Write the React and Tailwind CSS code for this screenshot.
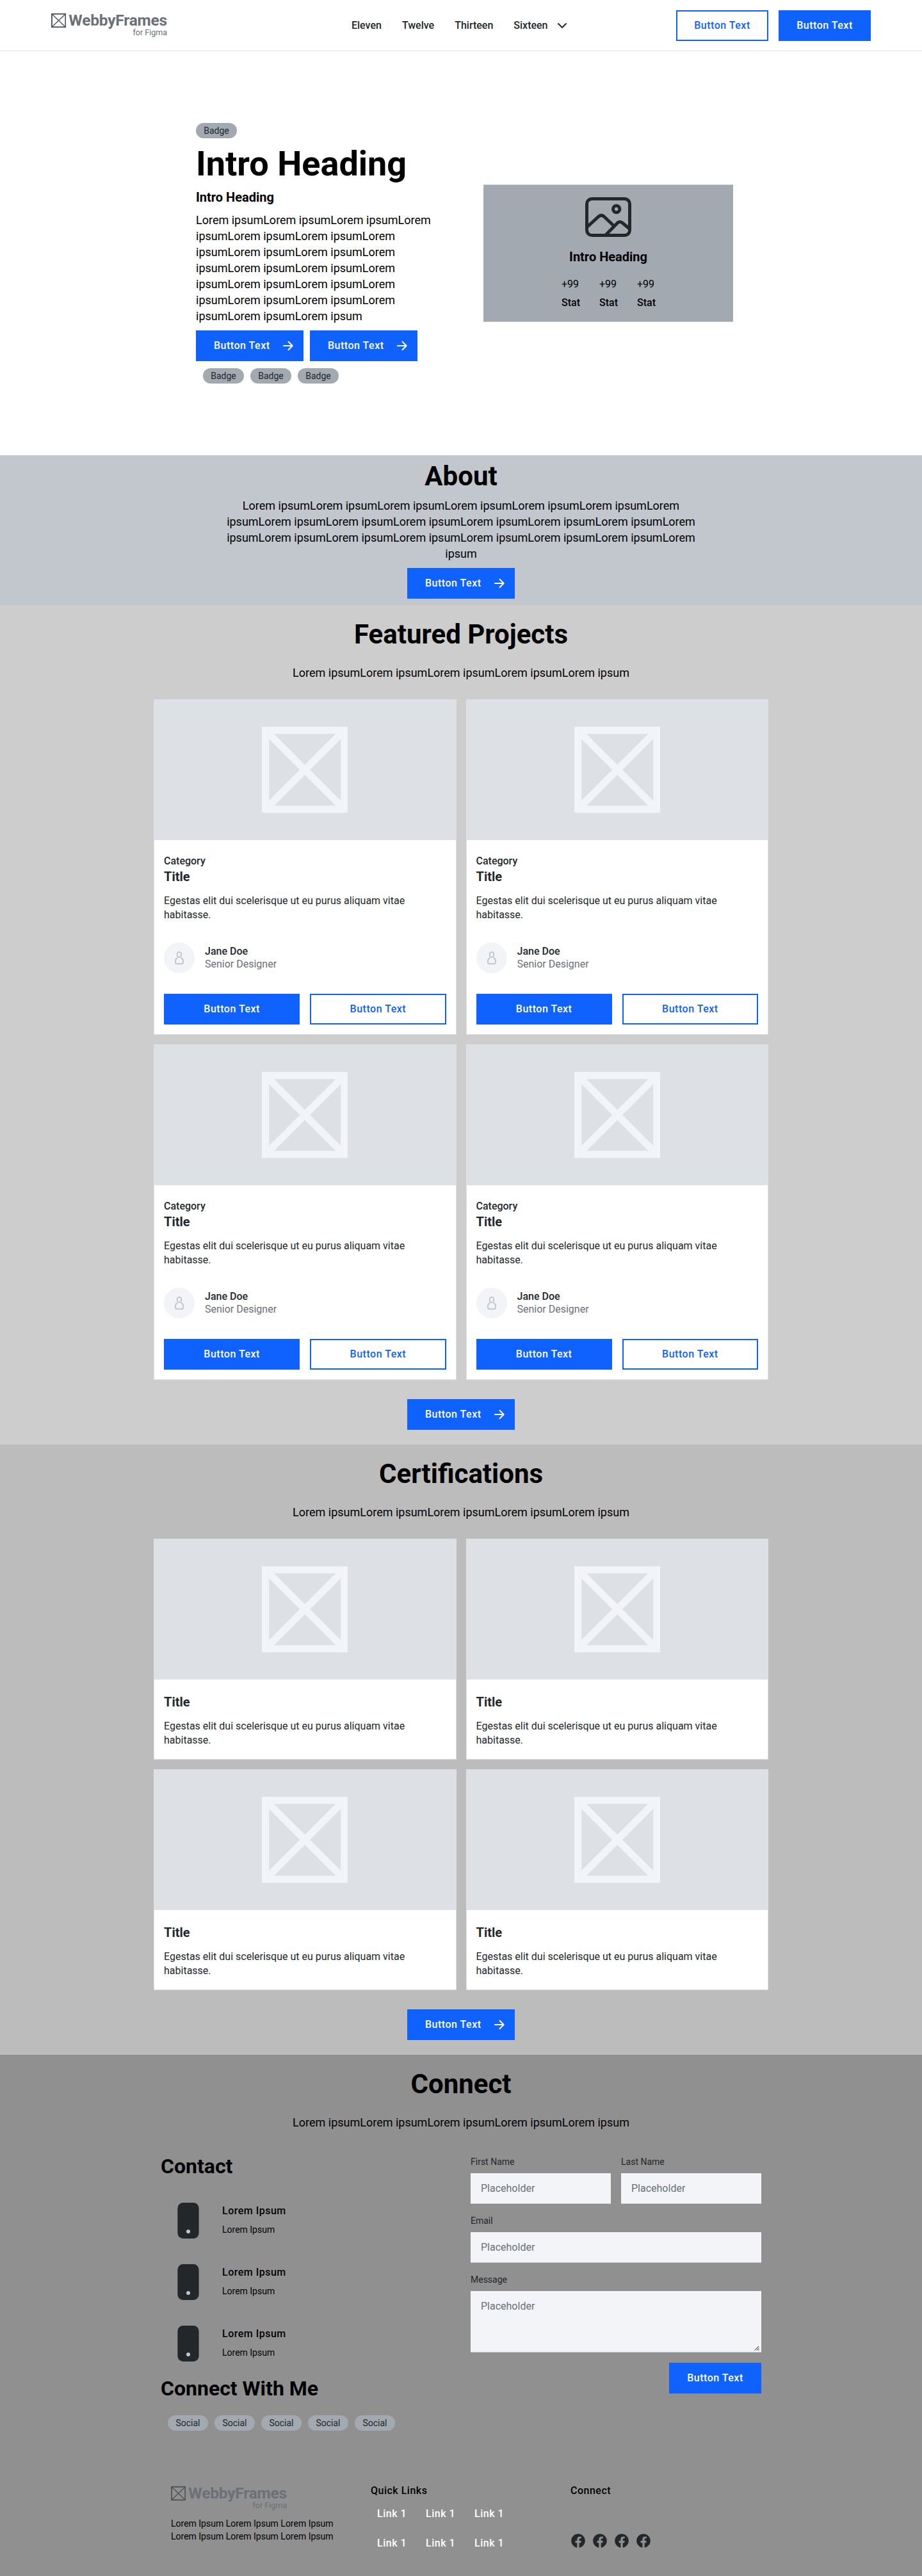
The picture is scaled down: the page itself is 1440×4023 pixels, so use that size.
import React from "react";

const LOREM_SHORT = "Lorem ipsumLorem ipsumLorem ipsumLorem ipsumLorem ipsum";

function Arrow() {
  return (
    <svg viewBox="0 0 24 24" className="h-6 w-6" fill="none" stroke="currentColor" strokeWidth="2">
      <path d="M5 12h13M12.5 5.8 18.7 12l-6.2 6.2" strokeLinejoin="round" strokeLinecap="round" />
    </svg>
  );
}

function Button({ outline, arrow, className = "" }) {
  const look = outline
    ? "border-2 border-[#0f62fe] bg-white text-[#0f62fe]"
    : "bg-[#0f62fe] text-white";
  return (
    <button
      className={`flex h-12 items-center text-base font-medium leading-4 tracking-[0.5px] whitespace-nowrap ${look} ${
        arrow ? "w-[168px] justify-start pl-7 pr-3" : "justify-center"
      } ${className}`}
    >
      <span>Button Text</span>
      {arrow && (
        <span className="ml-auto">
          <Arrow />
        </span>
      )}
    </button>
  );
}

function Badge({ children, className = "w-16" }) {
  return (
    <span
      className={`flex h-6 items-center justify-center rounded-full bg-[#a2a9b0] text-sm text-[#21272a] ${className}`}
    >
      {children}
    </span>
  );
}

function Logo() {
  return (
    <div className="relative h-10 w-[181px] text-[#697077]">
      <div className="flex items-start">
        <svg viewBox="0 0 25 24" className="h-6 w-[25px]" fill="none" stroke="#4d5358">
          <rect x="1" y="1" width="23" height="22" strokeWidth="2" />
          <path d="M1 1 24 23M24 1 1 23" strokeWidth="1.5" />
        </svg>
        <span className="ml-1 text-[24.5px] font-bold leading-6 tracking-[-0.2px]">WebbyFrames</span>
      </div>
      <span className="absolute right-0 top-[23px] text-[12.5px] leading-4">for Figma</span>
    </div>
  );
}

function Header() {
  return (
    <header className="flex h-20 items-center border-b border-[#dde1e6] bg-white pl-20 pr-20">
      <div className="mt-[1px] w-[469px]">
        <Logo />
      </div>
      <nav className="flex items-center gap-8 text-base font-medium text-[#21272a]">
        <span>Eleven</span>
        <span>Twelve</span>
        <span>Thirteen</span>
        <span className="flex items-center gap-2.5">
          Sixteen
          <svg viewBox="0 0 24 24" className="h-6 w-6" fill="none" stroke="currentColor" strokeWidth="2">
            <path d="m6 9 6 6 6-6" strokeLinejoin="round" strokeLinecap="round" />
          </svg>
        </span>
      </nav>
      <div className="ml-auto flex gap-4">
        <Button outline className="w-36" />
        <Button className="w-36" />
      </div>
    </header>
  );
}

function Hero() {
  return (
    <section className="flex h-[631px] bg-white pl-[306px]">
      <div className="flex w-[390px] flex-col items-start gap-2.5 pt-28">
        <Badge>Badge</Badge>
        <h1 className="text-[54px] font-bold leading-[60px]">Intro Heading</h1>
        <h3 className="text-xl font-bold leading-[25px]">Intro Heading</h3>
        <p className="text-lg leading-[25px]">
          Lorem ipsumLorem ipsumLorem ipsumLorem
          <br />
          ipsumLorem ipsumLorem ipsumLorem
          <br />
          ipsumLorem ipsumLorem ipsumLorem
          <br />
          ipsumLorem ipsumLorem ipsumLorem
          <br />
          ipsumLorem ipsumLorem ipsumLorem
          <br />
          ipsumLorem ipsumLorem ipsumLorem
          <br />
          ipsumLorem ipsumLorem ipsum
        </p>
        <div className="flex gap-2.5">
          <Button arrow />
          <Button arrow />
        </div>
        <div className="mt-[1px] flex gap-2.5 pl-[11px]">
          <Badge>Badge</Badge>
          <Badge>Badge</Badge>
          <Badge>Badge</Badge>
        </div>
      </div>
      <div className="ml-[59px] mt-[208px] flex h-[215px] w-[390px] flex-col items-center border-y border-[#cdd1d5] bg-[#a2a9b0]">
        <svg viewBox="0 0 72 62" className="mt-[19px] h-[62px] w-[72px]" fill="none" stroke="#21272a" strokeWidth="5">
          <rect x="2.5" y="2.5" width="67" height="57" rx="8" />
          <circle cx="48.7" cy="18.5" r="5.2" />
          <path d="M3 46.5 21.2 30q4-3.4 8 0L45 45" />
          <path d="M31.5 59.5 50.5 40q3.5-3 7.5 0L69.5 49.5" />
        </svg>
        <h3 className="mt-[19px] text-xl font-bold leading-[25px]">Intro Heading</h3>
        <div className="mt-5 flex gap-[31px]">
          {[0, 1, 2].map((i) => (
            <div key={i} className="flex w-7 flex-col text-base leading-5 text-black">
              <span>+99</span>
              <span className="mt-[9px] font-medium">Stat</span>
            </div>
          ))}
        </div>
      </div>
    </section>
  );
}

function About() {
  return (
    <section className="flex h-[234px] flex-col items-center bg-[#c1c7cd] pt-2.5">
      <h2 className="text-[42px] font-bold leading-[46px]">About</h2>
      <p className="mt-2.5 text-center text-lg leading-[25px]">
        Lorem ipsumLorem ipsumLorem ipsumLorem ipsumLorem ipsumLorem ipsumLorem
        <br />
        ipsumLorem ipsumLorem ipsumLorem ipsumLorem ipsumLorem ipsumLorem ipsumLorem
        <br />
        ipsumLorem ipsumLorem ipsumLorem ipsumLorem ipsumLorem ipsumLorem ipsumLorem
        <br />
        ipsum
      </p>
      <Button arrow className="mt-2.5" />
    </section>
  );
}

function SectionTitle({ children }) {
  return (
    <>
      <h2 className="text-[42px] font-bold leading-[46px]">{children}</h2>
      <p className="mt-6 text-lg leading-[25px]">{LOREM_SHORT}</p>
    </>
  );
}

function CardImage() {
  return (
    <div className="flex h-[219px] items-center justify-center bg-[#dde1e6]">
      <svg viewBox="0 0 134.4 134.4" className="h-[134.4px] w-[134.4px]" fill="none" stroke="#f2f4f8" strokeWidth="11.2">
        <rect x="5.6" y="5.6" width="123.2" height="123.2" />
        <path d="M5.6 5.6 128.8 128.8M128.8 5.6 5.6 128.8" />
      </svg>
    </div>
  );
}

function ProjectCard() {
  return (
    <article className="h-[524px] border border-[#dde1e6] bg-white text-[#21272a]">
      <CardImage />
      <div className="px-[15px] pt-[22px]">
        <div className="text-base font-medium leading-[22px]">Category</div>
        <div className="mt-0.5 text-xl font-bold leading-[22px]">Title</div>
        <CardText />
        <div className="mt-[31px] flex items-center gap-4">
          <div className="flex h-12 w-12 items-center justify-center rounded-full bg-[#f2f4f8]">
            <svg viewBox="0 0 24 24" className="h-6 w-6" fill="none" stroke="#c1c7cd" strokeWidth="2">
              <rect x="8.8" y="2.8" width="6.4" height="8.2" rx="3.2" />
              <path d="M9.3 12C7.4 12.6 6 14.4 6 16.8v1.9C6 20.3 7 21.2 8.5 21.2h7c1.5 0 2.5-.9 2.5-2.5v-1.9c0-2.4-1.4-4.2-3.3-4.8" />
            </svg>
          </div>
          <div className="text-base leading-5">
            <div className="font-medium">Jane Doe</div>
            <div className="text-[#697077]">Senior Designer</div>
          </div>
        </div>
        <div className="mt-8 grid grid-cols-2 gap-4">
          <Button />
          <Button outline />
        </div>
      </div>
    </article>
  );
}

function CardText() {
  return (
    <p className="mt-4 text-base leading-[22.4px]">
      Egestas elit dui scelerisque ut eu purus aliquam vitae
      <br />
      habitasse.
    </p>
  );
}

function CertificationCard() {
  return (
    <article className="h-[345px] border border-[#dde1e6] bg-white text-[#21272a]">
      <CardImage />
      <div className="px-[15px] pt-6">
        <div className="text-xl font-bold leading-[22px]">Title</div>
        <CardText />
      </div>
    </article>
  );
}

function CardSection({ title, color, Card }) {
  return (
    <section className={`flex flex-col items-center pb-[23px] pt-[23px] ${color}`}>
      <SectionTitle>{title}</SectionTitle>
      <div className="mt-[29px] grid w-[960px] grid-cols-2 gap-[15px]">
        {[0, 1, 2, 3].map((i) => (
          <Card key={i} />
        ))}
      </div>
      <Button arrow className="mt-[30px]" />
    </section>
  );
}

function Field({ label, className = "" }) {
  return (
    <label className={`block ${className}`}>
      <span className="block text-sm leading-5 text-[#21272a]">{label}</span>
      <input
        placeholder="Placeholder"
        className="mt-2 block h-12 w-full border-b border-[#c1c7cd] bg-[#f2f4f8] px-4 text-base outline-none placeholder:text-[#697077]"
      />
    </label>
  );
}

function ContactForm() {
  return (
    <form className="w-[454px] pt-[19px]">
      <div className="flex gap-4">
        <Field label="First Name" className="flex-1" />
        <Field label="Last Name" className="flex-1" />
      </div>
      <Field label="Email" className="mt-4" />
      <label className="relative mt-4 block">
        <span className="block text-sm leading-5 text-[#21272a]">Message</span>
        <textarea
          placeholder="Placeholder"
          className="mt-2 block h-24 w-full resize-none border-b border-[#c1c7cd] bg-[#f2f4f8] px-4 pt-3 text-base outline-none placeholder:text-[#697077]"
        />
        <svg viewBox="0 0 8 8" className="absolute bottom-[3px] right-[3px] h-2 w-2" stroke="#21272a" strokeWidth="1">
          <path d="M.5 7.5 7 1M3.5 7.5 7.5 3.5M6 7.8 7.8 6" />
        </svg>
      </label>
      <Button className="ml-auto mt-4 w-36" />
    </form>
  );
}

function Connect() {
  return (
    <section className="flex flex-col items-center pt-[23px]">
      <SectionTitle>Connect</SectionTitle>
      <div className="flex w-full justify-between pl-[251px] pr-[251px] pt-[20px]">
        <div className="pt-[17px]">
          <h3 className="text-[32px] font-bold leading-[38px]">Contact</h3>
          <div className="mt-[18px] flex flex-col">
            {[0, 1, 2].map((i) => (
              <div key={i} className="flex h-24 items-center pl-[26px]">
                <svg viewBox="0 0 34 56" className="h-14 w-[34px]">
                  <rect x=".4" width="33.2" height="56" rx="8.5" fill="#21272a" />
                  <circle cx="17" cy="45" r="3" fill="#c6c6c6" />
                </svg>
                <div className="-mt-[3px] ml-[36px]">
                  <div className="text-base font-medium leading-[22px] tracking-[0.5px]">Lorem Ipsum</div>
                  <div className="mt-2 text-sm leading-5">Lorem Ipsum</div>
                </div>
              </div>
            ))}
          </div>
          <h3 className="mt-[3px] text-[32px] font-bold leading-[38px]">Connect With Me</h3>
          <div className="mt-[23px] flex gap-2.5 pl-[11px]">
            {[0, 1, 2, 3, 4].map((i) => (
              <Badge key={i} className="w-[63px]">
                Social
              </Badge>
            ))}
          </div>
        </div>
        <ContactForm />
      </div>
    </section>
  );
}

function Facebook() {
  return (
    <svg viewBox="0 0 24 24" className="h-6 w-6" fill="#21272a">
      <path d="M22.8 12.06C22.8 6.1 17.96 1.3 12 1.3S1.2 6.1 1.2 12.06c0 5.37 3.95 9.83 9.11 10.64v-7.53H7.57v-3.11h2.74V9.69c0-2.71 1.61-4.2 4.08-4.2 1.18 0 2.42.21 2.42.21v2.66h-1.36c-1.34 0-1.76.83-1.76 1.69v2.01h3l-.48 3.11h-2.52v7.53c5.16-.81 9.11-5.27 9.11-10.64z" />
    </svg>
  );
}

function Footer() {
  return (
    <footer className="mt-[84px] flex pl-[267px]">
      <div className="w-[312px] pt-[2px]">
        <Logo />
        <p className="mt-[9px] text-sm leading-5">
          Lorem Ipsum Lorem Ipsum Lorem Ipsum
          <br />
          Lorem Ipsum Lorem Ipsum Lorem Ipsum
        </p>
      </div>
      <div className="w-[312px] text-base font-medium tracking-[0.5px]">
        <div className="leading-[20px]">Quick Links</div>
        <div className="mt-4 grid w-[238px] grid-cols-3 gap-y-[26px] pl-2.5 leading-5 text-white">
          {[0, 1, 2, 3, 4, 5].map((i) => (
            <span key={i} className="w-[76px]">
              Link 1
            </span>
          ))}
        </div>
      </div>
      <div>
        <div className="text-base font-medium leading-[20px] tracking-[0.5px]">Connect</div>
        <div className="mt-[56px] flex gap-2.5">
          <Facebook />
          <Facebook />
          <Facebook />
          <Facebook />
        </div>
      </div>
    </footer>
  );
}

export default function App() {
  return (
    <div className="w-[1440px] font-['Roboto',sans-serif] text-black">
      <Header />
      <Hero />
      <About />
      <CardSection title="Featured Projects" color="bg-[#cdcdcd]" Card={ProjectCard} />
      <CardSection title="Certifications" color="bg-[#bcbcbc]" Card={CertificationCard} />
      <div className="h-[814px] bg-[#909090]">
        <Connect />
        <Footer />
      </div>
    </div>
  );
}
